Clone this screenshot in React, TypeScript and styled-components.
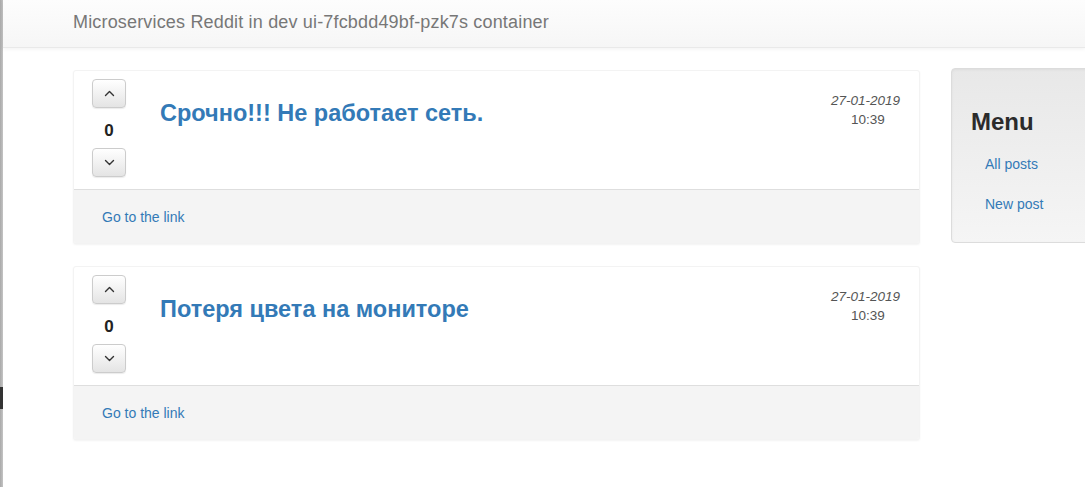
import React from "react";
import styled, { createGlobalStyle } from "styled-components";

const Global = createGlobalStyle`
  html, body { margin: 0; padding: 0; background: #fff; }
  body {
    font-family: "Liberation Sans", Arial, sans-serif;
    font-size: 14px;
    color: #333;
    overflow: hidden;
    width: 1085px;
    height: 487px;
  }
`;

const Page = styled.div`
  display: flex;
  width: 1085px;
  height: 487px;
  overflow: hidden;
`;

const EdgeStrip = styled.div`
  flex: 0 0 3px;
  background: linear-gradient(to right, #a9a9a9, #c4c4c4);
  display: flex;
  flex-direction: column;
`;

const EdgeMark = styled.div`
  margin-top: 387px;
  height: 22px;
  background: #333;
`;

const Main = styled.div`
  flex: 1;
  min-width: 0;
  display: flex;
  flex-direction: column;
`;

const Navbar = styled.header`
  height: 47px;
  background: linear-gradient(to bottom, #fdfdfd, #f6f6f6);
  border-bottom: 1px solid #e9e9e9;
  box-shadow: 0 1px 4px rgba(0, 0, 0, 0.06);
  display: flex;
  align-items: center;
  padding-left: 70px;
`;

const Brand = styled.span`
  font-size: 18px;
  letter-spacing: 0.17px;
  color: #777;
  margin-top: -3px;
`;

const Content = styled.div`
  display: flex;
  align-items: flex-start;
  padding: 22px 0 0 70px;
  gap: 31px;
`;

const Posts = styled.div`
  flex: 0 0 847px;
  display: flex;
  flex-direction: column;
  gap: 22px;
`;

const Card = styled.article`
  border: 1px solid #f3f3f3;
  border-radius: 3px;
  box-shadow: 0 1px 2px rgba(0, 0, 0, 0.05);
  overflow: hidden;
  background: #fff;
`;

const CardBody = styled.div`
  display: flex;
  align-items: flex-start;
  padding: 8px 19px 12px 18px;
  border-bottom: 1px solid #dedede;
`;

const Votes = styled.div`
  display: flex;
  flex-direction: column;
  align-items: center;
  width: 34px;
`;

const VoteButton = styled.button`
  width: 34px;
  height: 29px;
  padding: 0;
  border: 1px solid #ccc;
  border-radius: 4px;
  background: linear-gradient(to bottom, #fff 0%, #e4e4e4 100%);
  box-shadow: inset 0 1px 0 rgba(255, 255, 255, 0.15), 0 1px 1px rgba(0, 0, 0, 0.08);
  display: flex;
  align-items: center;
  justify-content: center;
  cursor: pointer;
`;

const Score = styled.div`
  font-size: 17px;
  font-weight: bold;
  color: #222;
  height: 40px;
  padding-top: 3px;
  box-sizing: border-box;
  line-height: 40px;
`;

const Title = styled.a`
  flex: 1;
  margin: 21px 0 0 34px;
  font-size: 23.5px;
  font-weight: bold;
  color: #337ab7;
  text-decoration: none;
  line-height: 26px;
`;

const DateBox = styled.div`
  display: flex;
  flex-direction: column;
  align-items: center;
  margin-top: 12px;
  font-size: 13.5px;
  color: #555;
  line-height: 19px;
`;

const DateLine = styled.em`
  font-style: italic;
`;

const TimeLine = styled.span`
  margin-left: 5px;
`;

const CardFooter = styled.div`
  background: #f4f4f4;
  height: 53px;
  display: flex;
  align-items: center;
  padding-left: 28px;
`;

const Link = styled.a`
  color: #337ab7;
  font-size: 14px;
  text-decoration: none;
`;

const Sidebar = styled.aside`
  flex: 0 0 170px;
  margin-top: -2px;
  height: 175px;
  border: 1px solid #dcdcdc;
  border-radius: 4px;
  background: linear-gradient(to bottom, #e8e8e8, #f5f5f5);
  box-shadow: inset 0 1px 3px rgba(0, 0, 0, 0.05), 0 1px 0 rgba(255, 255, 255, 0.1);
  padding: 40px 0 0 19px;
  box-sizing: border-box;
`;

const MenuTitle = styled.h3`
  margin: 0 0 21px;
  font-size: 24px;
  font-weight: bold;
  color: #2b2b2b;
  line-height: 26px;
`;

const MenuList = styled.ul`
  list-style: none;
  margin: 0;
  padding: 0 0 0 14px;
  display: flex;
  flex-direction: column;
  gap: 24px;
`;

const MenuLink = styled.a`
  color: #337ab7;
  font-size: 14px;
  text-decoration: none;
  line-height: 16px;
`;

const Chevron = ({ up }: { up?: boolean }) => (
  <svg width="11" height="7" viewBox="0 0 11 7">
    <polyline
      points={up ? "1.5,5.5 5.5,1.5 9.5,5.5" : "1.5,1.5 5.5,5.5 9.5,1.5"}
      fill="none"
      stroke="#333"
      strokeWidth="1.4"
      strokeLinecap="round"
      strokeLinejoin="round"
    />
  </svg>
);

const posts = [
  { title: "Срочно!!! Не работает сеть.", date: "27-01-2019", time: "10:39", score: 0 },
  { title: "Потеря цвета на мониторе", date: "27-01-2019", time: "10:39", score: 0 },
];

export default function App() {
  return (
    <Page>
      <Global />
      <EdgeStrip>
        <EdgeMark />
      </EdgeStrip>
      <Main>
        <Navbar>
          <Brand>Microservices Reddit in dev ui-7fcbdd49bf-pzk7s container</Brand>
        </Navbar>
        <Content>
          <Posts>
            {posts.map((p, i) => (
              <Card key={i}>
                <CardBody>
                  <Votes>
                    <VoteButton aria-label="upvote">
                      <Chevron up />
                    </VoteButton>
                    <Score>{p.score}</Score>
                    <VoteButton aria-label="downvote">
                      <Chevron />
                    </VoteButton>
                  </Votes>
                  <Title href="#">{p.title}</Title>
                  <DateBox>
                    <DateLine>{p.date}</DateLine>
                    <TimeLine>{p.time}</TimeLine>
                  </DateBox>
                </CardBody>
                <CardFooter>
                  <Link href="#">Go to the link</Link>
                </CardFooter>
              </Card>
            ))}
          </Posts>
          <Sidebar>
            <MenuTitle>Menu</MenuTitle>
            <MenuList>
              <li>
                <MenuLink href="#">All posts</MenuLink>
              </li>
              <li>
                <MenuLink href="#">New post</MenuLink>
              </li>
            </MenuList>
          </Sidebar>
        </Content>
      </Main>
    </Page>
  );
}
